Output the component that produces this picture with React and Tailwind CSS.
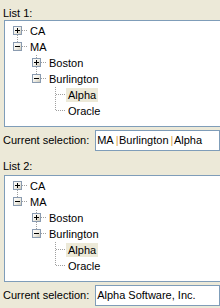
import React from 'react';

const rows = [
  { label: 'CA', depth: 0, up: false, down: true, box: 'plus' },
  { label: 'MA', depth: 0, up: true, down: false, box: 'minus' },
  { label: 'Boston', depth: 1, up: true, down: true, box: 'plus' },
  { label: 'Burlington', depth: 1, up: true, down: false, box: 'minus' },
  { label: 'Alpha', depth: 2, up: true, down: true, selected: true },
  { label: 'Oracle', depth: 2, up: true, down: false },
];

const DOT = '#a0a0a0';

function Connector({ up, down, box }) {
  return (
    <svg width="19" height="16" className="block shrink-0">
      <defs>
        <linearGradient id="bx" x1="0" y1="0" x2="1" y2="1">
          <stop offset="0" stopColor="#ffffff" />
          <stop offset="0.5" stopColor="#f2f0e8" />
          <stop offset="1" stopColor="#c8c4b4" />
        </linearGradient>
      </defs>
      {up && <line x1="8.5" y1="0" x2="8.5" y2="7" stroke={DOT} strokeDasharray="1 1" />}
      {down && <line x1="8.5" y1="8" x2="8.5" y2="16" stroke={DOT} strokeDasharray="1 1" />}
      <line x1="9" y1="7.5" x2="19" y2="7.5" stroke={DOT} strokeDasharray="1 1" />
      {box && (
        <g>
          <rect x="4.5" y="3.5" width="8" height="8" fill="url(#bx)" stroke="#8a9bb0" />
          <line x1="6" y1="7.5" x2="11" y2="7.5" stroke="#000" />
          {box === 'plus' && <line x1="8.5" y1="5" x2="8.5" y2="10" stroke="#000" />}
        </g>
      )}
    </svg>
  );
}

function Tree() {
  return (
    <div className="ml-[4px] w-[218px] h-[107px] border border-[#7f9db9] bg-white pt-[2px] pl-[4px]">
      {rows.map((r) => (
        <div key={r.label} className="flex items-center h-[16px]">
          {Array.from({ length: r.depth }).map((_, i) => (
            <div key={i} className="w-[19px] h-[16px] shrink-0" />
          ))}
          <Connector up={r.up} down={r.down} box={r.box} />
          <span
            className={
              'px-[2px] h-[14px] leading-[14px] text-[11px] text-black ' +
              (r.selected ? 'bg-[#ece9d8]' : '')
            }
          >
            {r.label}
          </span>
        </div>
      ))}
    </div>
  );
}

function Selection({ children }) {
  return (
    <div className="flex items-center mt-[3px] h-[21px]">
      <span className="w-[96px] pl-[3px] text-[11px] leading-[13px] text-black">Current selection:</span>
      <div className="w-[126px] h-[21px] border border-[#7f9db9] bg-white pl-[1px] flex items-center text-[11px] text-black whitespace-nowrap">
        {children}
      </div>
    </div>
  );
}

const Bar = () => <span className="text-[#d9a048] pl-[2px] pr-[0.5px]">|</span>;

export default function App() {
  return (
    <div className="w-[220px] h-[308px] overflow-hidden bg-[#ece9d8] font-['Liberation_Sans',Arial,sans-serif]">
      <div className="h-[20px] pt-[7px] pl-[3px] text-[11px] leading-[13px] text-black">List 1:</div>
      <Tree />
      <Selection>
        MA<Bar />Burlington<Bar />Alpha
      </Selection>
      <div className="h-[24px] pt-[9px] pl-[3px] text-[11px] leading-[13px] text-black">List 2:</div>
      <Tree />
      <Selection>Alpha Software, Inc.</Selection>
    </div>
  );
}
